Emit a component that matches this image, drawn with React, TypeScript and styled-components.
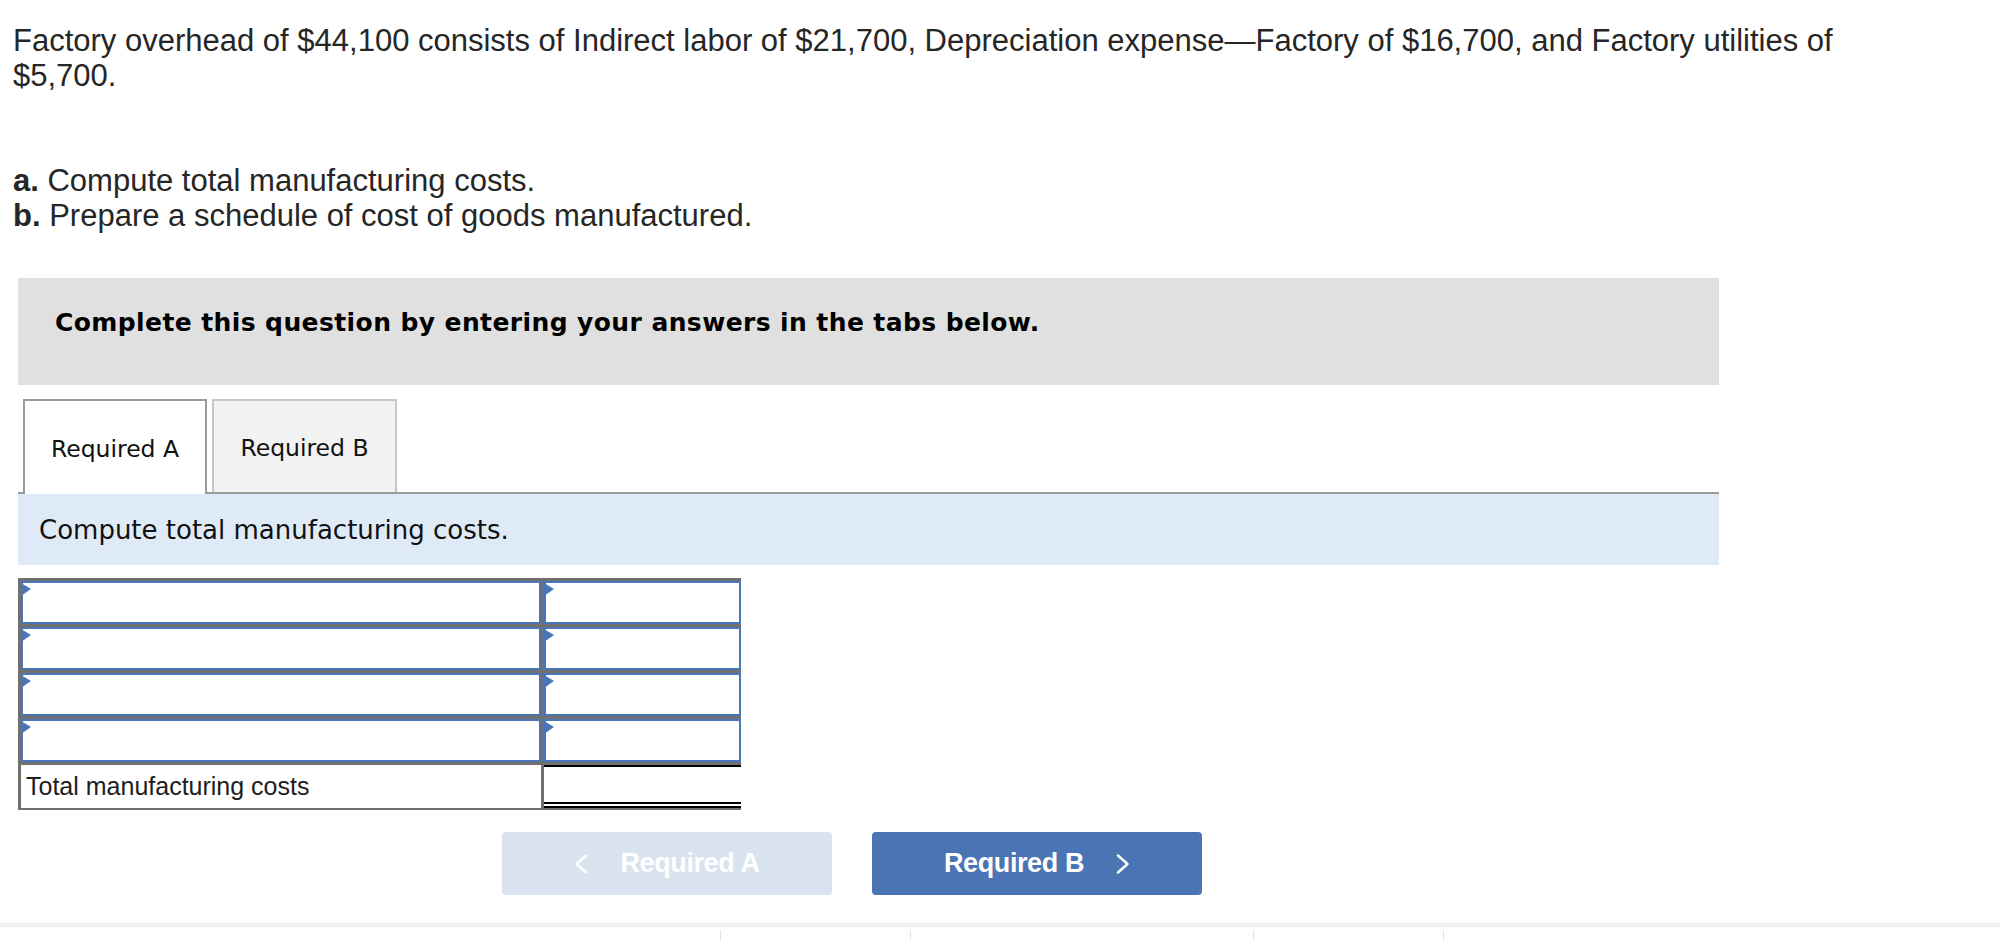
import { Fragment } from "react"
import styled, { createGlobalStyle } from "styled-components"

const GlobalStyle = createGlobalStyle`
  body {
    margin: 0;
    background: #fff;
    font-family: "Liberation Sans", Arial, sans-serif;
  }
`

const Page = styled.main`
  width: 2000px;
  display: flex;
  flex-direction: column;
`

const Question = styled.div`
  padding: 0 13px;
  color: #262626;
  font-family: "Liberation Sans", Arial, sans-serif;
  font-size: 31px;
  line-height: 35px;
`

const Intro = styled.p`
  margin: 23px 0 0;
  max-width: 1880px;
`

const Parts = styled.p`
  margin: 70px 0 0;
  b {
    font-weight: bold;
  }
`

const Workspace = styled.section`
  margin: 45px 0 0 18px;
  width: 1701px;
  display: flex;
  flex-direction: column;
`

const Banner = styled.div`
  height: 107px;
  box-sizing: border-box;
  padding: 30px 0 0 37px;
  background: #e0e0e0;
  color: #000;
  font-family: "DejaVu Sans", Verdana, sans-serif;
  font-weight: bold;
  font-size: 25px;
  line-height: 30px;
  letter-spacing: 0.4px;
`

const TabBar = styled.div`
  margin-top: 14px;
  display: flex;
  align-items: flex-start;
  gap: 5px;
  padding-left: 5px;
  border-bottom: 2px solid #9a9a9a;
`

const Tab = styled.div<{ $active?: boolean }>`
  box-sizing: border-box;
  width: ${p => (p.$active ? "184px" : "185px")};
  height: ${p => (p.$active ? "95px" : "93px")};
  margin-bottom: ${p => (p.$active ? "-2px" : "0")};
  border: 2px solid ${p => (p.$active ? "#9a9a9a" : "#c6c6c6")};
  border-bottom: none;
  background: ${p => (p.$active ? "#fff" : "#f2f2f2")};
  display: flex;
  align-items: center;
  justify-content: center;
  padding-top: 2px;
  font-family: "DejaVu Sans", Verdana, sans-serif;
  font-size: 23.5px;
  color: #111;
`

const Band = styled.div`
  height: 71px;
  padding-left: 21px;
  display: flex;
  align-items: center;
  background: #deebf7;
  font-family: "DejaVu Sans", Verdana, sans-serif;
  font-size: 26px;
  color: #111;
`

const Grid = styled.div`
  margin-top: 13px;
  width: 723px;
  box-sizing: border-box;
  display: grid;
  grid-template-columns: 520px 197px;
  grid-auto-rows: 43px;
  gap: 3px;
  padding: 3px 3px 2px;
  background: #707070;
`

const Entry = styled.div`
  position: relative;
  box-sizing: border-box;
  background: #fff;
  border: 2px solid #4a76b8;
  &::before {
    content: "";
    position: absolute;
    top: 0;
    left: -2px;
    border-top: 6px solid transparent;
    border-bottom: 7px solid transparent;
    border-left: 10px solid #4a76b8;
  }
`

const TotalLabel = styled.div`
  background: #fff;
  display: flex;
  align-items: center;
  padding-left: 5px;
  font-family: "Liberation Sans", Arial, sans-serif;
  font-size: 25px;
  color: #1d1d1d;
`

const TotalValue = styled.div`
  box-sizing: border-box;
  background: #fff;
  border-top: 2px solid #000;
  border-bottom: 6px double #000;
`

const Nav = styled.div`
  margin: 22px 0 0 484px;
  display: flex;
  gap: 40px;
`

const NavButton = styled.button<{ $disabled?: boolean }>`
  width: 330px;
  height: 63px;
  border: none;
  border-radius: 4px;
  background: ${p => (p.$disabled ? "#d9e3f0" : "#4a74b3")};
  color: #fff;
  display: flex;
  align-items: center;
  justify-content: center;
  gap: 32px;
  font-family: "Liberation Sans", Arial, sans-serif;
  font-weight: bold;
  font-size: 27px;
  letter-spacing: -0.4px;
  padding: 0;
  svg {
    width: 14px;
    height: 20px;
  }
`

const Footer = styled.footer`
  margin-top: 28px;
  border-top: 4px solid #f0f0f0;
  display: flex;
  height: 15px;
`

const FootCell = styled.div<{ $w: number; $edge?: boolean }>`
  width: ${p => p.$w}px;
  margin-top: 3px;
  border-left: ${p => (p.$edge ? "1px solid #e2e2e2" : "none")};
`

const Chevron = ({ dir }: { dir: "left" | "right" }) => (
  <svg viewBox="0 0 14 20" fill="none">
    <polyline
      points={dir === "left" ? "12,1.5 2.5,10 12,18.5" : "2,1.5 11.5,10 2,18.5"}
      stroke="#fff"
      strokeWidth="2.4"
      strokeLinecap="round"
      strokeLinejoin="round"
    />
  </svg>
)

export default function App() {
  const rows = [0, 1, 2, 3]

  return (
    <>
      <GlobalStyle />
      <Page>
        <Question>
          <Intro>
            Factory overhead of $44,100 consists of Indirect labor of $21,700, Depreciation expense—Factory of $16,700, and Factory utilities of $5,700.
          </Intro>
          <Parts>
            <b>a.</b> Compute total manufacturing costs.
            <br />
            <b>b.</b> Prepare a schedule of cost of goods manufactured.
          </Parts>
        </Question>

        <Workspace>
          <Banner>Complete this question by entering your answers in the tabs below.</Banner>
          <TabBar>
            <Tab $active>Required A</Tab>
            <Tab>Required B</Tab>
          </TabBar>
          <Band>Compute total manufacturing costs.</Band>

          <Grid>
            {rows.map(r => (
              <Fragment key={r}>
                <Entry />
                <Entry />
              </Fragment>
            ))}
            <TotalLabel>Total manufacturing costs</TotalLabel>
            <TotalValue />
          </Grid>

          <Nav>
            <NavButton $disabled>
              <Chevron dir="left" />
              <span>Required A</span>
            </NavButton>
            <NavButton>
              <span>Required B</span>
              <Chevron dir="right" />
            </NavButton>
          </Nav>
        </Workspace>

        <Footer>
          <FootCell $w={721} />
          <FootCell $w={190} $edge />
          <FootCell $w={342} $edge />
          <FootCell $w={190} $edge />
          <FootCell $w={557} $edge />
        </Footer>
      </Page>
    </>
  )
}
